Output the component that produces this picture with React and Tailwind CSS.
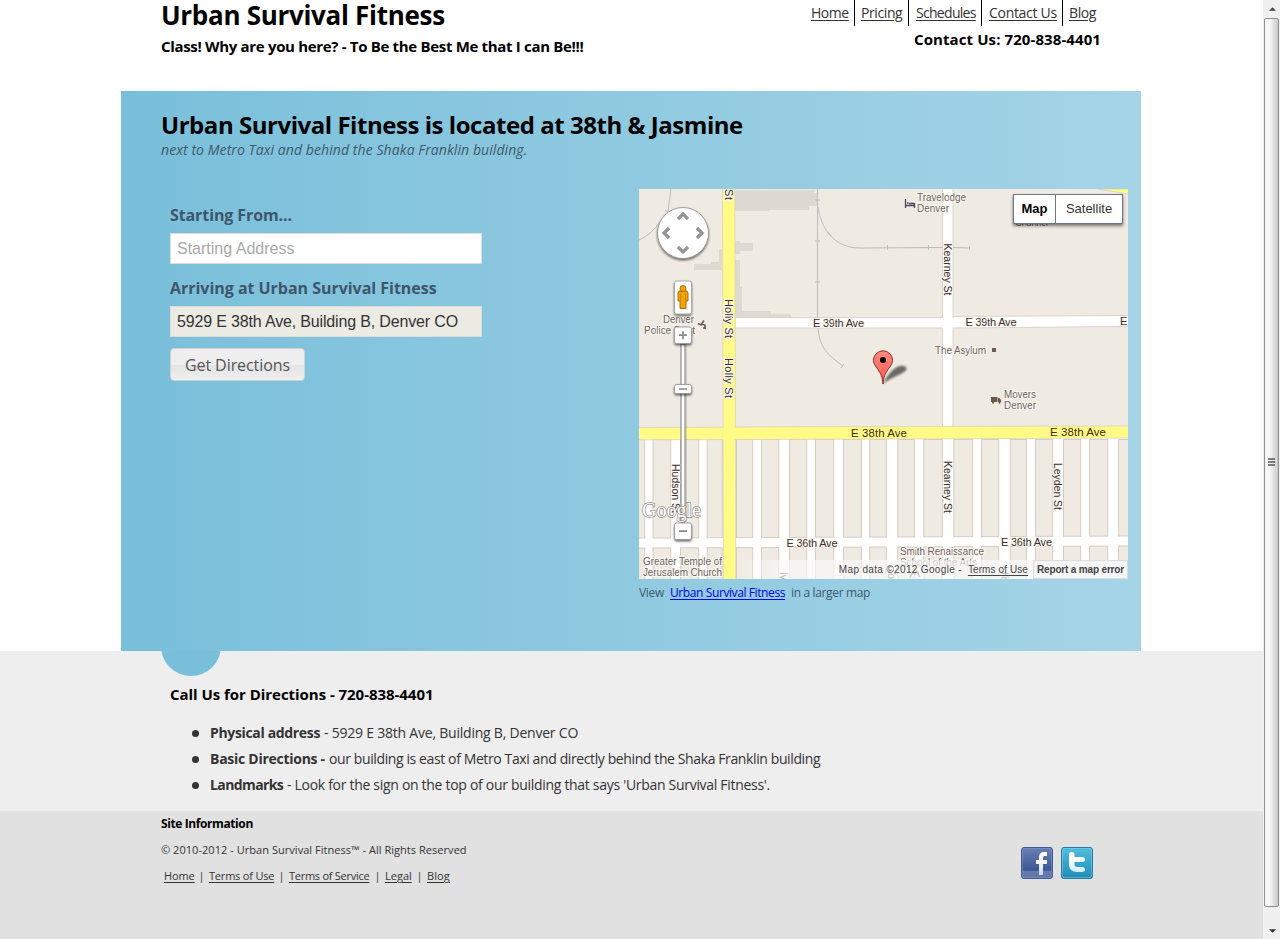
import React from "react";

const NAV = [
  { label: "Home", cls: "w-[44px] border-r tracking-[-0.5px]" },
  { label: "Pricing", cls: "w-[54px] border-r pl-[6px] tracking-[-0.4px]" },
  { label: "Schedules", cls: "w-[73px] border-r pl-[7px] tracking-[-0.7px]" },
  { label: "Contact Us", cls: "w-[81px] border-r pl-[7px] tracking-[-0.3px]" },
  { label: "Blog", cls: "w-[33px] pl-[6px] tracking-[-0.4px]" },
];

function Header() {
  return (
    <header className="flex h-[91px] justify-between pl-[40px] pr-[40px] text-black">
      <div className="whitespace-nowrap">
        <h1 className="h-[36px] text-[26px] leading-[31px] font-bold tracking-[-0.3px]">Urban Survival Fitness</h1>
        <p className="text-[15px] leading-5 font-bold tracking-[-0.32px]">Class! Why are you here? - To Be the Best Me that I can Be!!!</p>
      </div>
      <div className="flex flex-col items-end">
        <nav className="flex h-[26px] pr-[5px]">
          {NAV.map((n) => (
            <a
              key={n.label}
              href="#"
              className={"block border-black text-[14px] leading-[26px] whitespace-nowrap text-[#333] underline underline-offset-2 " + n.cls}
            >
              {n.label}
            </a>
          ))}
        </nav>
        <p className="mt-[3px] text-[15px] leading-5 font-bold tracking-[0.09px] whitespace-nowrap">Contact Us: 720-838-4401</p>
      </div>
    </header>
  );
}

const STREETS = [
  [645, 652.5], [671, 680], [699, 706.7], [722.5, 736], [753, 761], [779, 789], [807, 815], [834, 843],
  [861.7, 869.3], [886.7, 897.3], [914.7, 923.3], [942.7, 953.3], [973, 981], [999, 1009.7],
  [1026.7, 1035], [1053, 1063], [1081, 1089], [1108, 1118],
];

const BLOCKS = STREETS.map(([, right], i) => [right, i + 1 < STREETS.length ? STREETS[i + 1][0] : 1130]);
BLOCKS.unshift([636, 645]);

function Label({ x, y, w, children, color = "#3c3028", size = 11, vertical = false }) {
  return (
    <text
      x={x}
      y={y}
      fontSize={size}
      textLength={w}
      fill={color}
      stroke={color === "#3c2c08" ? "#fffa8c" : "#f8f6f2"}
      strokeWidth="2"
      paintOrder="stroke"
      transform={vertical ? `rotate(90 ${x} ${y})` : undefined}
    >
      {children}
    </text>
  );
}

const POI = "#6e6259";

function MapDrawing() {
  return (
    <svg viewBox="639 189 489 390" className="block h-[390px] w-[489px] font-['Liberation_Sans',Arial,sans-serif]">
      <defs>
        <filter id="soft" x="-30%" y="-30%" width="160%" height="160%">
          <feGaussianBlur stdDeviation="1.3" />
        </filter>
        <filter id="drop" x="-30%" y="-30%" width="160%" height="170%">
          <feDropShadow dx="0" dy="1.5" stdDeviation="1.3" floodOpacity="0.6" />
        </filter>
        <linearGradient id="pin" x1="0" y1="0" x2="0" y2="1">
          <stop offset="0" stopColor="#ff8a80" />
          <stop offset="1" stopColor="#f75b50" />
        </linearGradient>
      </defs>
      <rect x="639" y="189" width="489" height="390" fill="#efebe3" />
      <g fill="#ded9d3">
        <path d="M735 190h79v3h3v13h-8v4h-40v1h-34z" />
        <path d="M735 241h5v2h13v8h-13v3h-5z" />
        <path d="M722 249h-3v13h-8v2h-17v6h28z" />
        <path d="M735 260h5v27h2v24h29v3h20v4h-56z" />
      </g>
      <g fill="none" stroke="#bcbcba" strokeWidth="1">
        <path d="M671 189c-1 8-2 14-3 22M660 222c-5 7-12 14-21 18M665 210l4 3" />
        <path d="M817.5 189v130M818 207c3 20 14 41 43 41l81-.5M953 247.500l17 .5" />
        <path d="M818 328c1 20 11 28 25 38M815 200h5M815 241h5M815 282h5M831 236l-3-4M887.500 245v5M928.500 245v5M969.500 246v4M841 368l3-4" />
      </g>
      <g fill="#fff" stroke="#dcd3c8" strokeWidth="1">
        <path d="M735 317.500H942.500V316.500L1129 315.500V326.500L953 328H735z" />
        <path d="M942.500 188V427h10.500V188z" />
        <path d="M942 318h12v9.500h-12z" stroke="none" />
        <path d="M638 438h491v142H638z" stroke="none" />
      </g>
      <g fill="#efebe3" stroke="#d6ccc3" strokeWidth="1">
        {BLOCKS.map(([a, b]) => {
          const mid = 538.5 - (a - 639) / 240;
          return (
            <React.Fragment key={a}>
              <rect x={a + 0.5} y="439.500" width={b - a - 0.8} height={mid - 440} />
              <rect x={a + 0.5} y={mid + 9.5} width={b - a - 0.8} height="50" />
            </React.Fragment>
          );
        })}
      </g>
      <g fill="#fffb86" stroke="#ddd2b8" strokeWidth="0.8">
        <path d="M638 427.500L860 426.500L1129 426V438L900 439L638 439.800z" />
        <path d="M722.500 188L723.500 580H735.800L734.800 188z" />
        <path d="M1097 189l32 5v-5z" />
      </g>
      <path d="M722.500 427.700h14v11.500h-14z" fill="#fffb86" />

      <Label x={725} y={189} w={11} vertical>St</Label>
      <Label x={725} y={299} w={39} vertical>Holly St</Label>
      <Label x={725} y={358} w={40} vertical>Holly St</Label>
      <Label x={944} y={243.500} w={52} size={10.5} vertical>Kearney St</Label>
      <Label x={944} y={461} w={52} size={10.5} vertical>Kearney St</Label>
      <Label x={1054} y={463} w={47} size={10.5} vertical>Leyden St</Label>
      <Label x={672} y={464} w={49} size={10.5} vertical>Hudson St</Label>
      <Label x={780} y={572} w={8} size={10.5} vertical>Iv</Label>
      <Label x={888} y={570} w={9} size={10.5} vertical>Jo</Label>
      <Label x={1001} y={572} w={8} size={10.5} vertical>Kr</Label>
      <Label x={813} y={327} w={51}>E 39th Ave</Label>
      <Label x={965.500} y={326} w={51}>E 39th Ave</Label>
      <Label x={1120} y={325}>E</Label>
      <Label x={851} y={437} w={56} size={11.500} color="#3c2c08">E 38th Ave</Label>
      <Label x={1050} y={436} w={56} size={11.500} color="#3c2c08">E 38th Ave</Label>
      <Label x={786.500} y={547} w={51}>E 36th Ave</Label>
      <Label x={1001} y={545.500} w={51}>E 36th Ave</Label>

      <Label x={917} y={201} w={49} size={10} color={POI}>Travelodge</Label>
      <Label x={917} y={212} w={32} size={10} color={POI}>Denver</Label>
      <Label x={1015} y={226} w={33} size={10} color={POI}>Channel</Label>
      <Label x={935} y={354} w={51} size={10} color={POI}>The Asylum</Label>
      <Label x={1004} y={398} w={32} size={10} color={POI}>Movers</Label>
      <Label x={1004} y={409} w={32} size={10} color={POI}>Denver</Label>
      <Label x={663} y={323} w={31} size={10} color={POI}>Denver</Label>
      <Label x={644} y={334} w={51} size={10} color={POI}>Police Dept</Label>
      <Label x={643} y={565} w={79} size={10} color={POI}>Greater Temple of</Label>
      <Label x={643} y={576} w={79} size={10} color={POI}>Jerusalem Church</Label>
      <Label x={900} y={555} w={84} size={10} color={POI}>Smith Renaissance</Label>
      <Label x={900} y={566} w={77} size={10} color={POI}>School of the Arts</Label>

      <path d="M905.500 199v9M905 205.500h10M914.500 203v5M907 203h1.500M909 203.500h5" stroke="#4a4660" strokeWidth="1.3" fill="none" />
      <rect x="992" y="348" width="4" height="4" fill="#6b5949" />
      <path d="M991 397h6.500v5H991zM998 398h1.500l1.500 2v2h-3z" fill="#6b5949" />
      <circle cx="993" cy="402.700" r="1" fill="#6b5949" />
      <circle cx="999.500" cy="402.700" r="1" fill="#6b5949" />
      <path d="M698 323.500l3 1.500 3-4.500M701 324l4 1v4M703 328h3" stroke="#6b5b52" strokeWidth="1.600" fill="none" />
      <path d="M910 577l3-5 2 2 2-3 3 6" stroke="#6e6259" strokeWidth="1.500" fill="none" />

      <path d="M883 384C887 376 892 368 900 366c6-1 9 3 4 6-6 4-14 6-21 12z" fill="#000" opacity="0.55" filter="url(#soft)" />
      <path d="M883 384c-.6-7-2-10-5-14.500-3-4-4.500-6-4.500-9.200a9.500 9.500 0 0 1 19 0c0 3.200-1.500 5.200-4.500 9.200-3 4.500-4.400 7.500-5 14.500z" fill="url(#pin)" stroke="#8f2722" strokeWidth="1" />
      <circle cx="883" cy="360" r="3" fill="#000" />

      <g filter="url(#drop)">
        <circle cx="683" cy="233" r="25.500" fill="#fff" stroke="#8a8a8a" strokeWidth="0.800" />
        <rect x="674.500" y="281" width="17" height="33" rx="2" fill="#fff" stroke="#9a9a9a" strokeWidth="0.800" />
      </g>
      <path d="M678 219l5-5 5 5M678 247l5 5 5-5M669 228l-5 5 5 5M697 228l5 5-5 5" fill="none" stroke="#949494" strokeWidth="3.200" />
      <g fill="#f2a500" stroke="#a4610a" strokeWidth="0.900">
        <path d="M679 291h8l1 2v8h-2v7.500h-6V301h-2v-8z" />
        <circle cx="683" cy="288.500" r="3" />
      </g>
      <path d="M680.500 293.500v7M685.500 293.500v7" stroke="#b86f0a" strokeWidth="0.700" />

      <path d="M681 344v178h4V344z" fill="#fff" stroke="#777" strokeWidth="1" />
      <path d="M686.300 344v178" stroke="#999" strokeWidth="0.800" opacity="0.600" />
      <text x="642" y="517" fontSize="20" textLength="59" fill="#fff" stroke="#8b8983" strokeWidth="1.300" paintOrder="stroke" className="font-['Liberation_Serif',serif]">Google</text>
      <g filter="url(#drop)" fill="#fff" stroke="#8f8f8f" strokeWidth="0.800">
        <rect x="674.500" y="327" width="17" height="16.500" rx="2" />
        <rect x="674.500" y="384.500" width="17" height="9" rx="2" />
        <rect x="674.500" y="523" width="17" height="16.500" rx="2" />
      </g>
      <path d="M679 335.200h8M683 331.200v8M679 389h8M679 531.200h8" stroke="#8a8a8a" strokeWidth="1.700" />
    </svg>
  );
}

function MapPanel() {
  return (
    <div className="w-[489px]">
      <div className="relative h-[390px] overflow-hidden font-['Liberation_Sans',Arial,sans-serif]">
        <MapDrawing />
        <div className="absolute top-[5px] right-[5px] flex h-[30px] w-[110px] border border-[#6b7686] bg-white text-[13px] leading-[28px] text-[#333] shadow-[0_2px_3px_rgba(0,0,0,0.5)]">
          <button className="w-[42px] border-r border-[#6b7686] font-bold text-black">Map</button>
          <button className="flex-1">Satellite</button>
        </div>
        <div className="absolute right-0 bottom-0 flex h-[19px] items-stretch text-[10px] leading-[19px] whitespace-nowrap text-[#444]">
          <div className="flex w-[295px] justify-end bg-linear-to-r from-[#f8f8f8]/0 from-0% via-[#f8f8f8]/70 via-15% to-[#f8f8f8]/70 pr-[5px]">
            <span className="mr-[6px] tracking-[0.34px]">Map data ©2012 Google -</span>
            <a href="#" className="tracking-[0.1px] underline underline-offset-2">Terms of Use</a>
          </div>
          <a href="#" className="w-[95px] border border-[#dcdcdc] bg-[#f5f5f5] text-center leading-[17px] font-bold tracking-[-0.17px]">Report a map error</a>
        </div>
      </div>
      <p className="mt-[5px] flex text-[12px] leading-[18px] whitespace-nowrap text-[#3e5a6d]">
        <span className="w-[31px] tracking-[-0.3px]">View</span>
        <a href="#" className="w-[121px] tracking-[-0.4px] text-[#0000ee] underline underline-offset-2">Urban Survival Fitness</a>
        <span className="tracking-[-0.35px]">in a larger map</span>
      </p>
    </div>
  );
}

function DirectionsForm() {
  const field =
    "block h-[31px] w-[312px] border border-[#dcdcdc] px-[6px] font-['Liberation_Sans',Arial,sans-serif] text-[16px] leading-[29px] placeholder:text-[#a9a9a9]";
  return (
    <form className="w-[312px] pt-[16px] text-[16px] text-[#3e566b]">
      <label className="mb-[8px] block leading-5 font-bold tracking-[-0.1px] whitespace-nowrap">Starting From...</label>
      <input className={field + " bg-white text-[#333]"} placeholder="Starting Address" />
      <label className="mt-[14px] mb-[8px] block leading-5 font-bold tracking-[-0.03px] whitespace-nowrap">Arriving at Urban Survival Fitness</label>
      <input className={field + " bg-[#ebebe4] tracking-[-0.16px] text-[#333]"} defaultValue="5929 E 38th Ave, Building B, Denver CO" readOnly />
      <button
        type="button"
        className="mt-[11px] h-[33px] w-[135px] rounded-[4px] border border-[#d0d0d0] bg-linear-to-b from-[#eeeeee] from-50% via-[#e3e3e3] via-52% to-[#efefef] text-[16px] leading-[30px] tracking-[-0.07px] whitespace-nowrap text-[#555]"
      >
        Get Directions
      </button>
    </form>
  );
}

function Location() {
  return (
    <section className="h-[560px] bg-linear-to-r from-[#79bfda] to-[#a5d4e7] pt-[19px]">
      <div className="h-[79px] pl-[40px] whitespace-nowrap">
        <h2 className="text-[24px] leading-[30px] font-bold tracking-[-0.46px] text-black">Urban Survival Fitness is located at 38th &amp; Jasmine</h2>
        <p className="text-[14px] leading-5 tracking-[0.08px] text-[#3e5a6d] italic">next to Metro Taxi and behind the Shaka Franklin building.</p>
      </div>
      <div className="flex justify-between pr-[13px] pl-[49px]">
        <DirectionsForm />
        <MapPanel />
      </div>
    </section>
  );
}

const FACTS = [
  {
    title: "Physical address",
    titleCls: "w-[110px] tracking-[-0.34px]",
    body: "- 5929 E 38th Ave, Building B, Denver CO",
    bodyCls: "tracking-[-0.22px]",
  },
  {
    title: "Basic Directions -",
    titleCls: "w-[115px] tracking-[-0.27px]",
    body: "our building is east of Metro Taxi and directly behind the Shaka Franklin building",
    bodyCls: "tracking-[-0.39px]",
  },
  {
    title: "Landmarks",
    titleCls: "w-[73px] tracking-[-0.6px]",
    body: "- Look for the sign on the top of our building that says 'Urban Survival Fitness'.",
    bodyCls: "tracking-[-0.3px]",
  },
];

function Details() {
  return (
    <section className="h-[160px] bg-[#eeeeee] pt-[33px]">
      <div className="ml-[121px] w-[1020px] pl-[49px]">
        <h3 className="h-[36px] text-[15px] leading-5 font-bold tracking-[-0.04px] text-black">Call Us for Directions - 720-838-4401</h3>
        <ul className="text-[14px] whitespace-nowrap text-[#333]">
          {FACTS.map((f) => (
            <li key={f.title} className="flex h-[26px] items-center pl-[22px] leading-[26px]">
              <i className="mr-[11px] size-[7px] rounded-full bg-[#333]" />
              <b className={"mr-[4px] " + f.titleCls}>{f.title}</b>
              <span className={f.bodyCls}>{f.body}</span>
            </li>
          ))}
        </ul>
      </div>
    </section>
  );
}

function Social() {
  return (
    <div className="mt-[36px] flex gap-[8px]">
      <svg viewBox="0 0 32 32" className="size-8">
        <defs>
          <linearGradient id="fb" x1="0" y1="0" x2="0" y2="1">
            <stop offset="0" stopColor="#6a80b8" />
            <stop offset="0.74" stopColor="#3b5792" />
            <stop offset="0.75" stopColor="#647bad" />
            <stop offset="1" stopColor="#5d75aa" />
          </linearGradient>
          <linearGradient id="glyph" x1="0" y1="0" x2="0" y2="1">
            <stop offset="0.3" stopColor="#fff" />
            <stop offset="1" stopColor="#cbd6ec" />
          </linearGradient>
        </defs>
        <rect x="0.500" y="0.500" width="31" height="31" rx="2.500" fill="url(#fb)" stroke="#3f5b96" />
        <rect x="1.500" y="1.500" width="29" height="29" rx="1.500" fill="none" stroke="#8699c8" strokeOpacity="0.500" />
        <path d="M18 28V17h-3v-4h3v-2.500C18 7 20 5 23 5h3v4h-2c-1.500 0-2 .5-2 2v2h4v4h-4v11z" fill="url(#glyph)" />
      </svg>
      <svg viewBox="0 0 32 32" className="size-8">
        <defs>
          <linearGradient id="tw" x1="0" y1="0" x2="0" y2="1">
            <stop offset="0" stopColor="#4fbfde" />
            <stop offset="1" stopColor="#2389b7" />
          </linearGradient>
          <linearGradient id="bird" x1="0" y1="0" x2="0" y2="1">
            <stop offset="0.300" stopColor="#fff" />
            <stop offset="1" stopColor="#cdeefa" />
          </linearGradient>
        </defs>
        <rect x="0.500" y="0.500" width="31" height="31" rx="2.500" fill="url(#tw)" stroke="#2a7ba3" />
        <rect x="1.500" y="1.500" width="29" height="29" rx="1.500" fill="none" stroke="#7dd3ec" strokeOpacity="0.500" />
        <path d="M8 7.500c0-3.300 5.500-3.300 5.500 0V10H21c4 0 4 5 0 5h-7.500v2c0 2 1 3 3 3H21c4 0 4 5 0 5h-5c-5 0-8-3-8-7.500z" fill="url(#bird)" />
      </svg>
    </div>
  );
}

const FOOT_LINKS = [
  { label: "Home", cls: "w-[30px] tracking-[-0.1px]" },
  { label: "Terms of Use", cls: "w-[65px] tracking-[-0.2px]" },
  { label: "Terms of Service", cls: "w-[81px] tracking-[-0.26px]" },
  { label: "Legal", cls: "w-[27px]" },
  { label: "Blog", cls: "w-[24px] tracking-[0.1px]" },
];

function Footer() {
  return (
    <footer className="h-[128px] bg-[#e1e1e1]">
      <div className="ml-[121px] flex w-[1020px] justify-between pr-[48px] pl-[40px]">
        <div className="whitespace-nowrap text-[#333]">
          <h4 className="h-[26px] text-[12px] leading-[25px] font-bold tracking-[-0.4px] text-black">Site Information</h4>
          <p className="text-[11px] leading-[26px] tracking-[0.04px]">© 2010-2012 - Urban Survival Fitness™ - All Rights Reserved</p>
          <p className="flex pl-[3px] text-[11px] leading-[26px]">
            {FOOT_LINKS.map((l, i) => (
              <React.Fragment key={l.label}>
                {i > 0 && <span className="w-[15px] text-center">|</span>}
                <a href="#" className={"underline underline-offset-2 " + l.cls}>{l.label}</a>
              </React.Fragment>
            ))}
          </p>
        </div>
        <Social />
      </div>
    </footer>
  );
}

function Scrollbar() {
  return (
    <div className="flex h-[939px] w-[17px] flex-col bg-[#f0f0f0] pl-px">
      <div className="flex h-[18px] items-center justify-center">
        <svg viewBox="0 0 8 4" className="h-[4px] w-[7px]"><path d="M0 4L4 0l4 4z" fill="#444" /></svg>
      </div>
      <div className="flex h-[889px] w-[15px] items-center justify-center rounded-[2px] border border-[#8f8f8f] bg-linear-to-r from-[#f5f5f5] from-40% to-[#c9c9cd]">
        <svg viewBox="0 0 7 9" className="h-[9px] w-[7px]"><path d="M0 1h7M0 4h7M0 7h7" stroke="#555" strokeWidth="1.500" /></svg>
      </div>
      <div className="flex flex-1 items-end justify-center pb-[6px]">
        <svg viewBox="0 0 8 4" className="h-[4px] w-[7px]"><path d="M0 0l4 4 4-4z" fill="#333" /></svg>
      </div>
    </div>
  );
}

export default function App() {
  return (
    <div className="flex h-[939px] w-[1280px] overflow-hidden bg-white font-['Open_Sans','Noto_Sans',sans-serif]">
      <div className="w-[1263px]">
        <div className="relative ml-[121px] w-[1020px]">
          <Header />
          <Location />
          <svg viewBox="0 0 60 25" className="absolute top-full left-[40px] h-[25px] w-[60px]">
            <circle cx="30" cy="-5" r="30" fill="#7abfda" />
          </svg>
        </div>
        <Details />
        <Footer />
      </div>
      <Scrollbar />
    </div>
  );
}
